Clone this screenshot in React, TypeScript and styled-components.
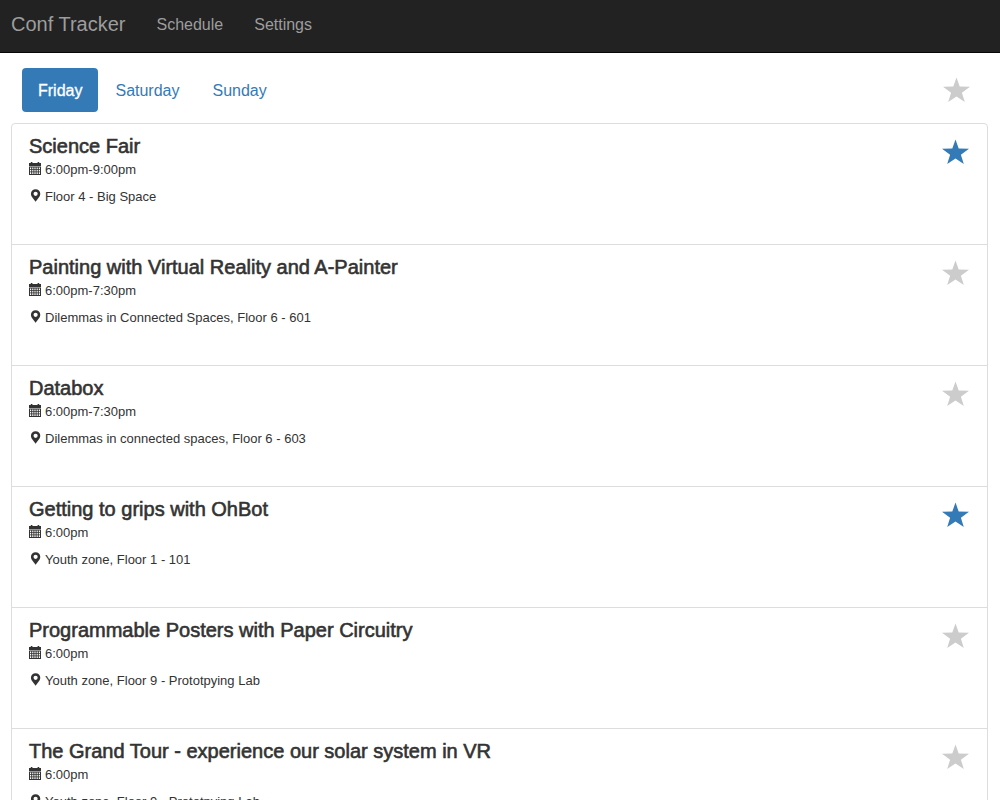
import React, { useState } from "react";
import styled, { createGlobalStyle } from "styled-components";

const GlobalStyle = createGlobalStyle`
  *, *::before, *::after { box-sizing: border-box; }
  body {
    margin: 0;
    background: #fff;
    color: #333;
    font-family: "Helvetica Neue", "Liberation Sans", Arial, sans-serif;
    font-size: 16px;
    line-height: 22px;
  }
  button { font: inherit; border: 0; cursor: pointer; }
`;

const Navbar = styled.nav`
  display: flex;
  align-items: center;
  min-height: 53px;
  padding: 0 11px 4px;
  gap: 31px;
  background: #222;
  border-bottom: 1px solid #080808;
`;

const Brand = styled.a`
  color: #9d9d9d;
  font-size: 20px;
  line-height: 24px;
  text-decoration: none;
`;

const NavLink = styled.a`
  padding-top: 2px;
  color: #9d9d9d;
  text-decoration: none;
`;

const Main = styled.main`
  padding: 15px 12px 24px 11px;
`;

const Toolbar = styled.header`
  display: flex;
  align-items: center;
  justify-content: space-between;
  padding: 0 18px 0 11px;
  margin-bottom: 11px;
`;

const Pills = styled.div`
  display: flex;
  gap: 1px;
`;

const Pill = styled.button<{ $active: boolean }>`
  padding: 12px 16px 10px;
  border-radius: 4px;
  background: ${(p) => (p.$active ? "#337ab7" : "transparent")};
  color: ${(p) => (p.$active ? "#fff" : "#337ab7")};
  -webkit-text-stroke: ${(p) => (p.$active ? "0.02em #fff" : "0")};
`;

const StarButton = styled.button<{ $active: boolean }>`
  display: flex;
  flex: none;
  padding: 0;
  background: none;
  color: ${(p) => (p.$active ? "#337ab7" : "#ccc")};
`;

const List = styled.ul`
  margin: 0;
  padding: 0;
  list-style: none;
  border: 1px solid #ddd;
  border-radius: 4px;
`;

const Session = styled.li`
  display: flex;
  align-items: flex-start;
  justify-content: space-between;
  padding: 10px 18px 31px 17px;
  border-bottom: 1px solid #ddd;

  &:last-child { border-bottom: 0; }

  ${StarButton} { margin-top: 5px; }
`;

const Title = styled.h4`
  margin: 0 0 1px;
  font-size: 20px;
  line-height: 24px;
  font-weight: 400;
  -webkit-text-stroke: 0.03em #333;
`;

const Icon = styled.svg`
  flex: none;
  display: block;
`;

const Detail = styled.p`
  display: flex;
  align-items: center;
  gap: 4px;
  margin: 0 0 5px;
  font-size: 13px;
  line-height: 22px;

  ${Icon} { margin-bottom: 3px; }
`;

const CalendarIcon = () => (
  <Icon width="12" height="13" viewBox="0 0 12 13" fill="currentColor" aria-hidden="true">
    <path d="M1.800 0h1.600v1h5.200V0h1.600v1H12v3H0V1h1.800z" />
    <path
      fillRule="evenodd"
      d="M0 4.600h12V13H0zM1 5.500v1.700h1.200V5.500zm2.200 0v1.700h1.200V5.500zm2.200 0v1.700h1.200V5.500zm2.200 0v1.700h1.200V5.500zm2.200 0v1.700H11V5.500zM1 7.900v1.700h1.200V7.900zm2.200 0v1.700h1.200V7.900zm2.200 0v1.700h1.200V7.900zm2.200 0v1.700h1.200V7.900zm2.200 0v1.700H11V7.900zM1 10.300V12h1.200v-1.700zm2.200 0V12h1.200v-1.700zm2.200 0V12h1.200v-1.700zm2.200 0V12h1.200v-1.700zm2.200 0V12H11v-1.700z"
    />
  </Icon>
);

const PinIcon = () => (
  <Icon width="12" height="13" viewBox="0 0 12 13" fill="currentColor" aria-hidden="true">
    <path
      fillRule="evenodd"
      d="M6.600.2a4.700 4.700 0 0 1 4.700 4.700C11.300 7.400 8.400 10 6.600 12.800C4.800 10 1.900 7.400 1.900 4.900A4.700 4.700 0 0 1 6.600.2zM6.600 2.700a2.100 2.100 0 1 0 0 4.200a2.100 2.100 0 0 0 0-4.200z"
    />
  </Icon>
);

const StarIcon = () => (
  <Icon width="27" height="26" viewBox="0 0 27 26" fill="currentColor" aria-hidden="true">
    <path d="M13.500.500l3.200 9.100 10.300.1-8.100 6 2.900 9.300-8.300-5.500L5.200 25l2.900-9.300L0 9.700l10.300-.1z" />
  </Icon>
);

const days = ["Friday", "Saturday", "Sunday"];

const sessions = [
  { title: "Science Fair", time: "6:00pm-9:00pm", place: "Floor 4 - Big Space", starred: true },
  { title: "Painting with Virtual Reality and A-Painter", time: "6:00pm-7:30pm", place: "Dilemmas in Connected Spaces, Floor 6 - 601", starred: false },
  { title: "Databox", time: "6:00pm-7:30pm", place: "Dilemmas in connected spaces, Floor 6 - 603", starred: false },
  { title: "Getting to grips with OhBot", time: "6:00pm", place: "Youth zone, Floor 1 - 101", starred: true },
  { title: "Programmable Posters with Paper Circuitry", time: "6:00pm", place: "Youth zone, Floor 9 - Prototpying Lab", starred: false },
  { title: "The Grand Tour - experience our solar system in VR", time: "6:00pm", place: "Youth zone, Floor 9 - Prototpying Lab", starred: false },
];

export default function App() {
  const [day, setDay] = useState("Friday");
  const [onlyStarred, setOnlyStarred] = useState(false);
  const [stars, setStars] = useState(sessions.map((s) => s.starred));

  const toggle = (index: number) =>
    setStars(stars.map((s, i) => (i === index ? !s : s)));

  return (
    <>
      <GlobalStyle />
      <Navbar>
        <Brand href="#">Conf Tracker</Brand>
        <NavLink href="#schedule">Schedule</NavLink>
        <NavLink href="#settings">Settings</NavLink>
      </Navbar>
      <Main>
        <Toolbar>
          <Pills>
            {days.map((d) => (
              <Pill key={d} type="button" $active={d === day} aria-pressed={d === day} onClick={() => setDay(d)}>
                {d}
              </Pill>
            ))}
          </Pills>
          <StarButton
            type="button"
            $active={onlyStarred}
            aria-label="Show starred sessions"
            aria-pressed={onlyStarred}
            onClick={() => setOnlyStarred(!onlyStarred)}
          >
            <StarIcon />
          </StarButton>
        </Toolbar>
        <List>
          {sessions.map((s, i) =>
            onlyStarred && !stars[i] ? null : (
              <Session key={s.title}>
                <div>
                  <Title>{s.title}</Title>
                  <Detail><CalendarIcon />{s.time}</Detail>
                  <Detail><PinIcon />{s.place}</Detail>
                </div>
                <StarButton
                  type="button"
                  $active={stars[i]}
                  aria-label={`Star ${s.title}`}
                  aria-pressed={stars[i]}
                  onClick={() => toggle(i)}
                >
                  <StarIcon />
                </StarButton>
              </Session>
            )
          )}
        </List>
      </Main>
    </>
  );
}
